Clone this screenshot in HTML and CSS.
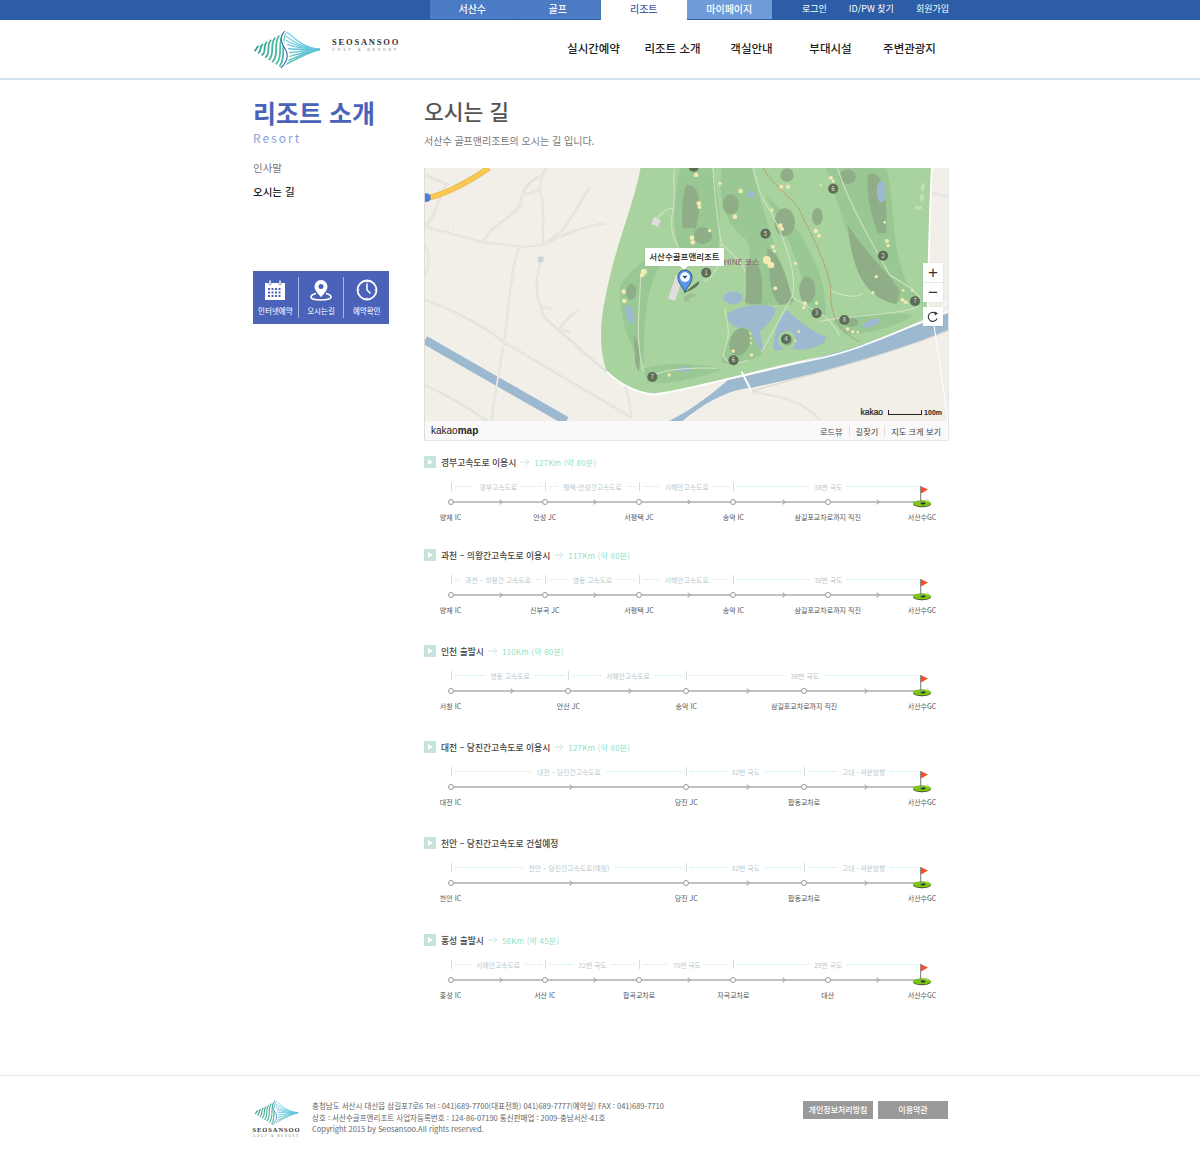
FILE: index.html
```html
<!DOCTYPE html>
<html lang="ko">
<head>
  <meta charset="UTF-8" />
  <meta name="viewport" content="width=device-width, initial-scale=1.0" />
  <title>오시는 길 - 서산수 골프앤리조트</title>
  <link rel="stylesheet" href="styles.css">
</head>
<body>
  <!-- shared symbols -->
  <svg class="defs" width="0" height="0">
    <defs>
      <linearGradient id="waveGrad" gradientUnits="userSpaceOnUse" x1="10" y1="0" x2="42" y2="0">
        <stop offset="0" stop-color="#2f9a8a" />
        <stop offset="1" stop-color="#4fc0a8" />
      </linearGradient>
      <linearGradient id="fanGrad" gradientUnits="userSpaceOnUse" x1="0" y1="6" x2="0" y2="40">
        <stop offset="0" stop-color="#7fd6ee" />
        <stop offset="0.55" stop-color="#62c4d8" />
        <stop offset="1" stop-color="#3fb59c" />
      </linearGradient>
      <symbol id="wave" viewBox="11 4 66 37">
        <g fill="none" stroke="url(#waveGrad)" stroke-width="1.700">
          <path d="M12.300 24.400C15 23 13.500 21 16.600 19.600" />
          <path d="M15.800 26.600C20 24 16.500 21 20.600 17.600" />
          <path d="M19.300 28.800C25 25 19.500 20 24.500 15.500" />
          <path d="M22.800 30.900C29 26 23 20 28.500 13.500" />
          <path d="M26.200 33.100C33 27 26.500 19 32.400 11.400" />
          <path d="M29.700 35.200C37 28 30 18 36.400 9.400" />
          <path d="M33.200 37.400C41 29 34 17 40.400 7.400" />
          <path d="M36.700 39.600C44 30 37 15 43 6" />
        </g>
        <g fill="none" stroke="url(#fanGrad)" stroke-width="1.300">
          <path d="M44 6C52 13 60 21 76 23" />
          <path d="M43 10C51 16 60 21.500 76 23" />
          <path d="M43 14C51 19 60 22 76 23" />
          <path d="M44 18C52 21 60 22.500 76 23" />
          <path d="M45 22C52 23 60 23 76 23" />
          <path d="M46 26C53 25.500 61 24 76 23" />
          <path d="M45.500 30C53 28 61 25 76 23" />
          <path d="M44 34C52 31 61 26 76 23" />
          <path d="M42 38C50 34 61 27 76 23" />
        </g>
        <path d="M43 5C36 12 41 19 44 24C47 30 44 36 39 41" fill="none" stroke="#fff" stroke-width="2.200" />
        <path d="M42 5C35 12 40 19 43 24C46 30 43 36 38 41" fill="none" stroke="#3d66c4" stroke-width="1.100" />
      </symbol>
      <symbol id="flag" viewBox="0 0 20 24">
        <ellipse cx="10" cy="19" rx="9" ry="3.300" fill="#4a4a35" />
        <ellipse cx="10" cy="18.300" rx="9" ry="3" fill="#7cc80e" />
        <ellipse cx="11" cy="18.500" rx="2.500" ry="1" fill="#26331a" />
        <circle cx="15.500" cy="15.500" r="1.300" fill="#d8d8d8" />
        <rect x="8" y="1" width="1.200" height="18" fill="#8d8d8d" />
        <path d="M9 1.200L16 4.500L10 8L9 8Z" fill="#f4502a" />
      </symbol>
      <symbol id="arrow" viewBox="0 0 10 8">
        <path d="M0 4H9M5.500 .8L9 4L5.500 7.200" fill="none" stroke="#bfe6d8" stroke-width="0.900" />
      </symbol>
    </defs>
  </svg>

  <div class="topbar">
    <div class="wrap topbar-in">
      <nav class="tabs">
        <a class="tab">서산수</a>
        <a class="tab">골프</a>
        <a class="tab active">리조트</a>
        <a class="tab light">마이페이지</a>
      </nav>
      <div class="util">
        <a>로그인</a>
        <a>ID/PW 찾기</a>
        <a>회원가입</a>
      </div>
    </div>
  </div>

  <header class="header">
    <div class="wrap header-in">
      <a class="logo">
        <svg class="logo-mark" width="68" height="38"><use href="#wave" /></svg>
        <span class="logo-text">
          <b>SEOSANSOO</b>
          <small>GOLF &amp; RESORT</small>
        </span>
      </a>
      <nav class="gnb">
        <a>실시간예약</a>
        <a>리조트 소개</a>
        <a>객실안내</a>
        <a>부대시설</a>
        <a>주변관광지</a>
      </nav>
    </div>
  </header>

  <div class="wrap content">
    <aside class="side">
      <h2>리조트 소개</h2>
      <p class="side-en">Resort</p>
      <ul class="side-menu">
        <li>인사말</li>
        <li class="on">오시는 길</li>
      </ul>
      <div class="quick">
        <a>
          <svg width="22" height="22" viewBox="0 0 22 22">
            <path d="M1 4h20v17H1z" fill="#fff" />
            <rect x="5" y="1" width="2" height="5" rx="1" fill="#fff" stroke="#4a62b8" stroke-width="0.6" />
            <rect x="15" y="1" width="2" height="5" rx="1" fill="#fff" stroke="#4a62b8" stroke-width="0.6" />
            <path d="M4 9h2v2H4zM7.500 9h2v2h-2zM11 9h2v2h-2zM14.500 9h2v2h-2zM4 12.500h2v2H4zM7.500 12.500h2v2h-2zM11 12.500h2v2h-2zM14.500 12.500h2v2h-2zM4 16h2v2H4zM7.500 16h2v2h-2zM11 16h2v2h-2zM14.500 16h2v2h-2z" fill="#4a62b8" />
          </svg>
          <span>인터넷예약</span>
        </a>
        <a>
          <svg width="22" height="22" viewBox="0 0 22 22">
            <path d="M11 1a6.500 6.500 0 0 0-6.500 6.500C4.500 12 11 18 11 18s6.500-6 6.500-10.500A6.500 6.500 0 0 0 11 1z" fill="#fff" />
            <circle cx="11" cy="7.500" r="2.500" fill="#4a62b8" />
            <path d="M6 14.500C3 15.300 1 16.500 1 18c0 2 4.500 3 10 3s10-1 10-3c0-1.500-2-2.700-5-3.500" fill="none" stroke="#fff" stroke-width="1.700" />
          </svg>
          <span>오시는길</span>
        </a>
        <a>
          <svg width="22" height="22" viewBox="0 0 22 22">
            <circle cx="11" cy="11" r="9.500" fill="none" stroke="#fff" stroke-width="1.800" />
            <path d="M11 4.500V11l3.500 3.500" fill="none" stroke="#fff" stroke-width="1.500" />
            <path d="M11 2v1.500M11 18.500V20M2 11h1.500M18.500 11H20" stroke="#fff" stroke-width="1" />
          </svg>
          <span>예약확인</span>
        </a>
      </div>
    </aside>

    <main class="main">
      <h1>오시는 길</h1>
      <p class="lead">서산수 골프앤리조트의 오시는 길 입니다.</p>

      <div class="map">
        <div class="map-view">
          <svg class="map-svg" viewBox="0 9 1553 759" preserveAspectRatio="none">
            <defs>
              <g id="roads">
                <path d="M0 185L170 232L280 245L350 240L410 195L490 65" />
                <path d="M0 405C100 440 200 500 235 532C350 600 500 690 610 755" />
                <path d="M0 660C60 690 130 730 185 768" />
                <path d="M280 245C250 330 250 440 235 532C220 620 205 700 197 768" />
                <path d="M170 232C190 190 240 170 280 125C290 100 280 60 350 30" />
                <path d="M350 240C350 180 355 130 345 90C335 60 350 30 358 9" />
                <path d="M285 90C310 85 335 80 345 72" />
                <path d="M0 185C25 160 40 110 60 60" />
                <path d="M0 30L70 60" />
                <path d="M350 240L390 220C420 210 440 190 535 175" />
                <path d="M345 285C325 350 330 390 345 430C350 470 400 490 480 570L540 620" />
                <path d="M400 490C420 460 435 450 458 435" />
                <path d="M345 425L378 432" />
                <path d="M400 490L430 503" />
                <path d="M0 240C20 280 5 320 0 330" />
                <path d="M590 650C605 690 610 730 612 758" />
                <path d="M940 620L970 680C1050 690 1130 710 1175 768" />
                <path d="M1505 85L1553 95" />
              </g>
            </defs>
            <rect x="0" y="9" width="1553" height="759" fill="#f2efe9" />
            <path d="M0 525L420 768" fill="none" stroke="#9cb9cf" stroke-width="26" />
            <path d="M725 768C800 730 860 680 900 645C1000 625 1300 550 1553 444V495C1400 560 1200 620 970 668C900 672 820 720 765 768Z" fill="#9cb9cf" />

            <use href="#roads" class="road" />
            <use href="#roads" class="road-in" />

            <path d="M640 9C620 120 565 240 535 400C518 480 518 560 540 620C570 650 620 680 680 685C800 670 1000 610 1150 580C1300 550 1420 490 1490 460C1495 300 1498 150 1503 9Z" fill="#a9d39e" />
            <!-- rough and fairways -->
            <g fill="#9ac894">
              <path d="M580 360C620 300 680 260 720 270C660 340 650 440 650 600C610 560 570 440 580 360Z" />
              <path d="M650 610C720 590 840 595 880 615C780 650 700 660 660 650Z" />
              <path d="M760 9C730 100 735 240 770 280H860C890 210 870 60 850 9Z" />
              <path d="M880 9C870 100 890 180 950 220C980 260 960 400 950 420H1090C1060 300 1000 130 970 9Z" />
              <path d="M1010 90C1070 200 1120 300 1140 440L1190 460C1200 340 1120 180 1010 90Z" />
              <path d="M1190 9C1240 150 1260 260 1340 380C1400 420 1460 420 1470 400C1380 340 1400 120 1370 9Z" />
              <path d="M1210 470C1260 440 1400 440 1450 450C1400 490 1290 510 1250 510Z" />
              <path d="M880 590C890 520 930 480 980 490L1000 570C960 590 910 610 880 590Z" />
            </g>
            <g fill="#8fad86">
              <path d="M775 60C820 55 820 120 805 190H765C762 150 762 100 775 60Z" />
              <ellipse cx="825" cy="212" rx="28" ry="25" />
              <ellipse cx="908" cy="118" rx="24" ry="30" />
              <ellipse cx="1068" cy="172" rx="30" ry="42" />
              <ellipse cx="1165" cy="155" rx="16" ry="26" />
              <ellipse cx="1075" cy="30" rx="20" ry="20" />
              <ellipse cx="1255" cy="35" rx="24" ry="22" />
              <path d="M1315 30C1350 10 1375 60 1370 205H1345C1320 140 1310 80 1315 30Z" />
              <path d="M960 285C1000 285 1005 340 1000 415C975 420 950 415 950 410C960 370 945 320 960 285Z" />
              <path d="M1015 250C1065 270 1075 360 1095 408L1055 420C1020 390 1025 320 1015 250Z" />
              <ellipse cx="1135" cy="375" rx="24" ry="40" />
              <path d="M1255 180C1320 280 1385 330 1410 380L1400 418C1320 400 1270 340 1255 180Z" />
              <ellipse cx="935" cy="530" rx="30" ry="42" transform="rotate(18 935 530)" />
              <ellipse cx="612" cy="380" rx="15" ry="24" />
              <ellipse cx="1265" cy="472" rx="22" ry="13" />
              <path d="M620 510C640 540 640 590 635 620L625 600Z" />
            </g>
            <!-- lakes -->
            <g fill="#9eb9cf">
              <ellipse cx="915" cy="398" rx="29" ry="19" />
              <path d="M895 450C930 420 1010 410 1040 430C1045 460 1000 490 995 500C1000 530 1005 550 1005 558C980 550 975 500 960 490C920 490 900 480 895 450Z" />
              <path d="M1075 435C1110 470 1150 500 1190 515C1195 540 1150 550 1110 555C1080 545 1050 560 1035 555C1035 510 1045 470 1075 435Z" />
              <ellipse cx="608" cy="448" rx="10" ry="30" transform="rotate(-12 608 448)" />
              <ellipse cx="770" cy="613" rx="25" ry="7" />
              <ellipse cx="1325" cy="475" rx="28" ry="10" transform="rotate(-20 1325 475)" />
              <ellipse cx="968" cy="88" rx="12" ry="10" />
              <ellipse cx="1355" cy="80" rx="14" ry="32" />
            </g>
            <ellipse cx="1075" cy="525" rx="26" ry="28" fill="#a9d39e" />
            <ellipse cx="1075" cy="525" rx="17" ry="17" fill="#8fad86" />
            <!-- cart paths -->
            <g fill="none" stroke="#d3e2c9" stroke-width="3">
              <path d="M740 9C735 60 745 90 738 130C720 200 745 240 770 270" />
              <path d="M855 9C860 100 870 170 880 240C880 290 870 320 830 350" />
              <path d="M880 235C930 280 950 310 950 320" />
              <path d="M975 9C985 60 1000 100 1020 130C1060 200 1110 330 1090 395L1000 560" />
              <path d="M1090 395C1130 430 1200 440 1230 510" />
              <path d="M1225 9C1260 120 1310 200 1380 330C1430 360 1460 380 1470 400" />
              <path d="M1205 375C1240 395 1290 400 1300 385" />
              <path d="M640 330C640 420 620 520 650 620" />
              <path d="M660 640C720 600 850 610 870 610" />
              <path d="M890 430C900 490 910 500 885 570C900 600 920 600 960 585" />
              <path d="M1170 470C1240 450 1420 450 1465 425" />
              <path d="M738 130C710 130 700 150 680 170" />
            </g>
            <!-- bank road -->
            <g fill="none">
              <path d="M540 620C570 650 610 680 680 690C800 670 1000 615 1150 585C1300 555 1420 490 1553 440" stroke="#fff" stroke-width="5" />
              <path d="M1492 465C1495 300 1498 150 1505 9" stroke="#fff" stroke-width="5" />
              <path d="M940 620L970 680" stroke="#fff" stroke-width="5" />
              <path d="M970 678C1180 620 1400 560 1553 497" stroke="#d9d6cf" stroke-width="3" />
              <path d="M1530 430L1553 410M1510 470L1553 768" stroke="#fff" stroke-width="3" />
            </g>
            <path d="M1005 9C1030 60 1090 100 1110 130C1140 200 1190 280 1205 370C1200 450 1230 500 1290 530" fill="none" stroke="#c0623a" stroke-width="2.500" stroke-dasharray="4 4" />
            <!-- sand -->
            <g fill="#f2eab0">
              <circle cx="650" cy="320" r="9" /><circle cx="645" cy="330" r="7" /><circle cx="590" cy="380" r="7" /><circle cx="592" cy="408" r="7" />
              <circle cx="813" cy="115" r="7" /><circle cx="815" cy="126" r="6" /><circle cx="793" cy="218" r="7" /><circle cx="795" cy="232" r="7" />
              <circle cx="845" cy="197" r="5" /><circle cx="805" cy="30" r="7" /><circle cx="876" cy="55" r="5" /><circle cx="937" cy="78" r="7" />
              <circle cx="920" cy="155" r="7" /><circle cx="1030" cy="135" r="5" /><circle cx="1055" cy="182" r="7" /><circle cx="1060" cy="192" r="6" />
              <circle cx="1015" cy="285" r="12" /><circle cx="1027" cy="300" r="10" /><circle cx="1033" cy="245" r="6" /><circle cx="1038" cy="258" r="5" />
              <circle cx="1100" cy="295" r="5" /><circle cx="1040" cy="370" r="6" /><circle cx="1160" cy="198" r="7" /><circle cx="1170" cy="212" r="6" />
              <circle cx="1058" cy="65" r="6" /><circle cx="1078" cy="65" r="6" /><circle cx="1205" cy="38" r="6" /><circle cx="1212" cy="48" r="5" />
              <circle cx="1175" cy="60" r="3" /><circle cx="1365" cy="172" r="4" /><circle cx="1372" cy="228" r="6" /><circle cx="1375" cy="242" r="5" />
              <circle cx="1340" cy="335" r="5" /><circle cx="1330" cy="383" r="5" /><circle cx="1418" cy="405" r="6" /><circle cx="1428" cy="412" r="6" />
              <circle cx="1420" cy="376" r="4" /><circle cx="1447" cy="376" r="4" /><circle cx="1128" cy="415" r="6" /><circle cx="1125" cy="428" r="5" />
              <circle cx="1163" cy="414" r="5" /><circle cx="1255" cy="492" r="5" /><circle cx="1270" cy="500" r="5" /><circle cx="1285" cy="501" r="4" />
              <circle cx="966" cy="505" r="3" /><circle cx="967" cy="520" r="3" /><circle cx="968" cy="535" r="3" /><circle cx="915" cy="558" r="5" />
              <circle cx="970" cy="570" r="5" /><circle cx="725" cy="630" r="5" /><circle cx="1110" cy="500" r="4" /><circle cx="1100" cy="528" r="3" />
            </g>
            <rect x="745" y="330" width="22" height="75" fill="#dedede" transform="rotate(18 745 330)" />
            <path d="M680 155L700 165L692 185L672 178Z" fill="#dedede" />
            <path d="M770 395L790 385L810 390L785 400L785 410L768 410Z" fill="#9fbf93" />
            <path d="M335 275H352V292H335Z" fill="#c8d3dc" />
            <path d="M70 140H80V148H70ZM72 178H80V192H72ZM215 155L224 160L222 168L214 164Z" fill="#fbfaf7" stroke="#dedbd4" />
            <path d="M1475 55H1485L1480 78H1472ZM1470 88H1482L1480 108H1470ZM1455 123H1475V133H1455Z" fill="#c5dcc0" />

            <!-- yellow road -->
            <path d="M0 100C60 90 130 50 190 9" fill="none" stroke="#dcb24a" stroke-width="17" />
            <path d="M0 100C60 90 130 50 190 9" fill="none" stroke="#fbc851" stroke-width="13" />
            <circle cx="4" cy="98" r="13" fill="#4b7fe0" />

            <text class="map-course" x="872" y="300">SHINE 코스</text>

            <g class="hole-marks">
              <circle cx="835" cy="323" r="15" /><text x="835" y="329">1</text>
              <circle cx="1360" cy="272" r="15" /><text x="1360" y="278">2</text>
              <circle cx="1163" cy="445" r="15" /><text x="1163" y="451">3</text>
              <circle cx="1072" cy="522" r="15" /><text x="1072" y="528">4</text>
              <circle cx="1011" cy="206" r="15" /><text x="1011" y="212">5</text>
              <circle cx="916" cy="586" r="15" /><text x="916" y="592">6</text>
              <circle cx="1212" cy="71" r="15" /><text x="1212" y="77">6</text>
              <circle cx="675" cy="636" r="15" /><text x="675" y="642">7</text>
              <circle cx="1455" cy="409" r="15" /><text x="1455" y="415">7</text>
              <circle cx="1245" cy="465" r="15" /><text x="1245" y="471">8</text>
              <circle cx="798" cy="5" r="15" />
            </g>
          </svg>

          <div class="info-win">서산수골프앤리조트</div>
          <svg class="pin" width="30" height="25" viewBox="0 0 34 28">
            <path d="M9 26L24 14C28 15 22 22 10 26Z" fill="#3b4d38" opacity="0.7" />
            <path d="M9 27C8 21 1 17 1 9a8 8 0 0 1 16 0c0 8-7 12-8 18z" fill="#5b97ee" stroke="#15305c" stroke-width="0.8" />
            <circle cx="9" cy="9" r="5.500" fill="#fff" />
            <path d="M6 7.500h6L9 11z" fill="#1d4a8c" />
          </svg>

          <div class="map-ctrl">
            <button class="ctrl-btn">+</button>
            <button class="ctrl-btn">−</button>
          </div>
          <div class="map-ctrl map-refresh">
            <button class="ctrl-btn">
              <svg width="12" height="12" viewBox="0 0 12 12">
                <path d="M10 7.500A4.500 4.500 0 1 1 8.500 2.300" fill="none" stroke="#333" stroke-width="1.100" />
                <path d="M7.500 .5L11 2.200L8 4.500Z" fill="#333" />
              </svg>
            </button>
          </div>
          <div class="map-scale">
            <b>kakao</b>
            <i class="scale-bar"></i>
            <span>100m</span>
          </div>
        </div>
        <div class="map-foot">
          <span class="kakaomap">kakao<b>map</b></span>
          <ul class="map-links">
            <li>로드뷰</li>
            <li>길찾기</li>
            <li>지도 크게 보기</li>
          </ul>
        </div>
      </div>

      <section class="route r-first">
        <h3 class="route-title"><i class="play"></i>경부고속도로 이용시<svg class="arrow"><use href="#arrow" /></svg><span class="dist">127Km (약 80분)</span></h3>
        <ul class="legs">
          <li><span>경부고속도로</span></li>
          <li><span>평택-안성간고속도로</span></li>
          <li><span>서해안고속도로</span></li>
          <li class="wide"><span>38번 국도</span></li>
        </ul>
        <div class="track">
          <i class="leg"></i><i class="leg"></i><i class="leg"></i><i class="leg"></i><i class="leg"></i>
          <svg class="flag"><use href="#flag" /></svg>
        </div>
        <div class="stops"><span>양재 IC</span><span>안성 JC</span><span>서평택 JC</span><span>송악 IC</span><span>삼길포교차로까지 직진</span><span>서산수GC</span></div>
      </section>

      <section class="route r-second">
        <h3 class="route-title"><i class="play"></i>과천 – 의왕간고속도로 이용시<svg class="arrow"><use href="#arrow" /></svg><span class="dist">117Km (약 80분)</span></h3>
        <ul class="legs">
          <li><span>과천 – 의왕간 고속도로</span></li>
          <li><span>영동 고속도로</span></li>
          <li><span>서해안고속도로</span></li>
          <li class="wide"><span>38번 국도</span></li>
        </ul>
        <div class="track">
          <i class="leg"></i><i class="leg"></i><i class="leg"></i><i class="leg"></i><i class="leg"></i>
          <svg class="flag"><use href="#flag" /></svg>
        </div>
        <div class="stops"><span>양재 IC</span><span>신부곡 JC</span><span>서평택 JC</span><span>송악 IC</span><span>삼길포교차로까지 직진</span><span>서산수GC</span></div>
      </section>

      <section class="route">
        <h3 class="route-title"><i class="play"></i>인천 출발시<svg class="arrow"><use href="#arrow" /></svg><span class="dist">110Km (약 80분)</span></h3>
        <ul class="legs">
          <li><span>영동 고속도로</span></li>
          <li><span>서해안고속도로</span></li>
          <li class="wide"><span>38번 국도</span></li>
        </ul>
        <div class="track">
          <i class="leg"></i><i class="leg"></i><i class="leg"></i><i class="leg"></i>
          <svg class="flag"><use href="#flag" /></svg>
        </div>
        <div class="stops"><span>서창 IC</span><span>안산 JC</span><span>송악 IC</span><span>삼길포교차로까지 직진</span><span>서산수GC</span></div>
      </section>

      <section class="route">
        <h3 class="route-title"><i class="play"></i>대전 – 당진간고속도로 이용시<svg class="arrow"><use href="#arrow" /></svg><span class="dist">127Km (약 80분)</span></h3>
        <ul class="legs">
          <li class="wide"><span>대전 – 당진간고속도로</span></li>
          <li><span>32번 국도</span></li>
          <li><span>고대 · 석문방향</span></li>
        </ul>
        <div class="track">
          <i class="leg wide"></i><i class="leg"></i><i class="leg"></i>
          <svg class="flag"><use href="#flag" /></svg>
        </div>
        <div class="stops"><span>대전 IC</span><span></span><span>당진 JC</span><span>합동교차로</span><span>서산수GC</span></div>
      </section>

      <section class="route">
        <h3 class="route-title"><i class="play"></i>천안 – 당진간고속도로 건설예정</h3>
        <ul class="legs">
          <li class="wide"><span>천안 – 당진간고속도로(예정)</span></li>
          <li><span>32번 국도</span></li>
          <li><span>고대 · 석문방향</span></li>
        </ul>
        <div class="track">
          <i class="leg wide"></i><i class="leg"></i><i class="leg"></i>
          <svg class="flag"><use href="#flag" /></svg>
        </div>
        <div class="stops"><span>천안 IC</span><span></span><span>당진 JC</span><span>합동교차로</span><span>서산수GC</span></div>
      </section>

      <section class="route r-last">
        <h3 class="route-title"><i class="play"></i>홍성 출발시<svg class="arrow"><use href="#arrow" /></svg><span class="dist">58Km (약 45분)</span></h3>
        <ul class="legs">
          <li><span>서해안고속도로</span></li>
          <li><span>32번 국도</span></li>
          <li><span>70번 국도</span></li>
          <li class="wide"><span>29번 국도</span></li>
        </ul>
        <div class="track">
          <i class="leg"></i><i class="leg"></i><i class="leg"></i><i class="leg"></i><i class="leg"></i>
          <svg class="flag"><use href="#flag" /></svg>
        </div>
        <div class="stops"><span>홍성 IC</span><span>서산 IC</span><span>합곡교차로</span><span>자곡교차로</span><span>대산</span><span>서산수GC</span></div>
      </section>
    </main>
  </div>

  <footer class="footer">
    <div class="wrap footer-in">
      <div class="foot-logo">
        <svg width="47" height="25"><use href="#wave" /></svg>
        <b>SEOSANSOO</b>
        <small>GOLF &amp; RESORT</small>
      </div>
      <div class="foot-text">
        <p>충청남도 서산시 대산읍 삼길포7로6 Tel : 041)689-7700(대표전화) 041)689-7777(예약실) FAX : 041)689-7710</p>
        <p>상호 : 서산수골프앤리조트 사업자등록번호 : 124-86-07190 통신판매업 : 2009-충남서산-41호</p>
        <p>Copyright 2015 by Seosansoo.All rights reserved.</p>
      </div>
      <div class="foot-btns">
        <a>개인정보처리방침</a>
        <a>이용약관</a>
      </div>
    </div>
  </footer>
</body>
</html>
```

FILE: styles.css
```css
body {
  margin: 0;
  background: #fff;
  color: #444;
  font-family: "Noto Sans CJK KR", "Noto Sans", sans-serif;
  font-size: 10px;
}
h1, h2, h3, p, ul {
  margin: 0;
  padding: 0;
  font-weight: normal;
}
ul {
  list-style: none;
}
.defs {
  position: absolute;
}
.wrap {
  width: 696px;
  margin-left: 253px;
}

/* top bar */
.topbar {
  height: 20px;
  background: #2c5da6;
}
.topbar-in {
  display: flex;
  height: 20px;
}
.tabs {
  display: flex;
  margin-left: 177px;
}
.tab {
  width: 85.5px;
  height: 19px;
  box-sizing: border-box;
  background: #4a7bc4;
  border-right: 1px solid #457abf;
  color: #fff;
  font-size: 10px;
  font-weight: 500;
  line-height: 17px;
  text-align: center;
}
.tab.active {
  height: 20px;
  background: #fff;
  border-right: 0;
  color: #4a5f9f;
}
.tab.light {
  background: #6f9bd9;
  border: 0;
}
.util {
  display: flex;
  gap: 22px;
  margin-left: auto;
  color: #fff;
  font-size: 9px;
  line-height: 17px;
}

/* header */
.header {
  height: 58px;
  border-bottom: 2px solid #d5e2f3;
}
.header-in {
  display: flex;
  align-items: center;
  height: 58px;
}
.logo {
  display: flex;
  align-items: center;
  gap: 11px;
}
.logo-text {
  display: flex;
  flex-direction: column;
  margin-top: -8px;
  font-family: "Liberation Serif", serif;
  color: #333;
  line-height: 1;
}
.logo-text b {
  font-size: 8.5px;
  letter-spacing: 1.8px;
}
.logo-text small {
  margin-top: 1px;
  font-size: 4px;
  letter-spacing: 2.8px;
  color: #777;
}
.gnb {
  display: flex;
  margin-top: -2px;
  margin-left: auto;
  color: #222;
  font-size: 11.5px;
  font-weight: 500;
}
.gnb a {
  width: 79px;
  text-align: center;
}

/* content */
.content {
  display: flex;
  margin-top: 18px;
}
.side {
  width: 171px;
  flex: none;
}
.side h2 {
  color: #4a62b8;
  font-size: 25px;
  font-weight: 700;
  line-height: 28px;
}
.side-en {
  margin-top: 3px;
  color: #8ca3dc;
  font-size: 12px;
  letter-spacing: 2px;
  line-height: 18px;
}
.side-menu {
  margin-top: 13px;
  color: #777;
  font-size: 10.5px;
}
.side-menu li {
  height: 24px;
  line-height: 16px;
}
.side-menu .on {
  color: #222;
  font-weight: 500;
}
.quick {
  display: flex;
  width: 136px;
  height: 53px;
  margin-top: 63px;
  padding: 6px 0;
  box-sizing: border-box;
  background: #4a62b8;
}
.quick a {
  flex: 1;
  display: flex;
  flex-direction: column;
  align-items: center;
  gap: 4px;
  padding-top: 2px;
  color: #e4e9f8;
  font-size: 7.5px;
  font-weight: 500;
  line-height: 12px;
  border-left: 1px solid #aab7e4;
}
.quick a:first-child {
  border-left: 0;
}

.main {
  width: 525px;
}
.main h1 {
  color: #555;
  font-size: 21.5px;
  font-weight: 500;
  line-height: 26px;
}
.lead {
  margin-top: 9px;
  color: #777;
  font-size: 10px;
  line-height: 16px;
}

/* map */
.map {
  margin-top: 19px;
  height: 273px;
  box-sizing: border-box;
  border: 1px solid #e8e8e8;
  border-top: 0;
  border-left-color: #dfdcd6;
}
.map-view {
  position: relative;
  height: 253px;
  overflow: hidden;
}
.map-svg {
  display: block;
  width: 100%;
  height: 253px;
}
.road {
  fill: none;
  stroke: #d7d5cf;
  stroke-width: 6;
}
.road-in {
  fill: none;
  stroke: #f8f7f4;
  stroke-width: 2.5;
}
.map-course {
  fill: #8c5f70;
  font-size: 24px;
}
.hole-marks circle {
  fill: #5c6c56;
}
.hole-marks text {
  fill: #e6e6e6;
  font-size: 17px;
  text-anchor: middle;
}
.info-win {
  position: absolute;
  left: 220px;
  top: 80px;
  width: 79px;
  height: 18px;
  background: #fff;
  color: #222;
  font-size: 8.5px;
  font-weight: 500;
  line-height: 17px;
  text-align: center;
  box-shadow: 0 0 1px rgba(0, 0, 0, 0.15);
}
.info-win::after {
  content: "";
  position: absolute;
  left: 35px;
  top: 18px;
  border: 4px solid transparent;
  border-top-color: #fff;
}
.pin {
  position: absolute;
  left: 252px;
  top: 101px;
}
.map-ctrl {
  position: absolute;
  left: 498px;
  top: 95px;
  display: flex;
  flex-direction: column;
  gap: 1px;
  background: #e6e6e6;
  box-shadow: 0 0 1px rgba(0, 0, 0, 0.2);
}
.map-refresh {
  top: 139px;
}
.ctrl-btn {
  display: flex;
  align-items: center;
  justify-content: center;
  width: 20px;
  height: 19px;
  padding: 0;
  border: 0;
  background: #fff;
  color: #333;
  font-family: "Liberation Sans", sans-serif;
  font-size: 17px;
  line-height: 1;
}
.map-scale {
  position: absolute;
  right: 6px;
  bottom: 4px;
  display: flex;
  align-items: flex-end;
  gap: 5px;
  color: #222;
  font-family: "Liberation Sans", sans-serif;
  font-size: 7px;
  font-weight: 700;
  line-height: 9px;
}
.map-scale b {
  font-size: 8.5px;
  font-weight: 400;
  -webkit-text-stroke: 0.2px #222;
}
.scale-bar {
  width: 32px;
  height: 4px;
  margin-bottom: 2px;
  margin-right: -3px;
  border: 1px solid #222;
  border-top: 0;
}
.map-foot {
  display: flex;
  align-items: center;
  justify-content: space-between;
  height: 19px;
  padding: 0 7px 0 6px;
  background: #f9f9f9;
}
.kakaomap {
  color: #222;
  font-family: "Liberation Sans", sans-serif;
  font-size: 10px;
}
.map-links {
  display: flex;
  align-items: center;
  color: #444;
  font-size: 8.2px;
  line-height: 10px;
}
.map-links li + li {
  margin-left: 6px;
  padding-left: 6px;
  border-left: 1px solid #ddd;
}

/* routes */
.route {
  height: 78px;
  margin-top: 18px;
}
.r-first,
.r-second {
  margin-top: 15px;
}
.r-last {
  margin-top: 19px;
}
.route-title {
  display: flex;
  align-items: center;
  height: 12px;
  color: #444;
  font-size: 8.8px;
  font-weight: 500;
  white-space: nowrap;
}
.play {
  flex: none;
  position: relative;
  width: 12px;
  height: 12px;
  margin-right: 5px;
  background: #c5e5dc;
}
.play::after {
  content: "";
  position: absolute;
  left: 4px;
  top: 3px;
  border: 3px solid transparent;
  border-left: 5px solid #fff;
  border-right: 0;
}
.arrow {
  flex: none;
  width: 10px;
  height: 8px;
  margin: 0 4px;
}
.dist {
  color: #93dfc6;
  font-size: 8px;
  font-weight: 400;
  letter-spacing: 0.2px;
}
.legs {
  display: flex;
  height: 10px;
  margin: 14px 27px 0 26.5px;
}
.legs li {
  flex: 1 1 0;
  min-width: 0;
  display: flex;
  align-items: center;
  gap: 5px;
  height: 9px;
  box-shadow: inset 1px 0 #d3e0e0;
  color: #b7c9ce;
  font-size: 6.8px;
  white-space: nowrap;
}
.legs li.wide {
  flex-grow: 2;
}
.legs li::before,
.legs li::after {
  content: "";
  flex: 1;
  border-top: 1px dotted #cfe5e3;
}
.legs li::before {
  margin-left: 4px;
}
.legs li::after {
  margin-right: 3px;
}
.track {
  position: relative;
  display: flex;
  height: 2px;
  margin: 9px 27px 0 26.5px;
  background: #c2c2c2;
}
.leg {
  flex: 1;
  position: relative;
}
.leg.wide {
  flex: 2;
}
.leg::before {
  content: "";
  position: absolute;
  left: -3px;
  top: -2px;
  width: 4px;
  height: 4px;
  border: 1px solid #999;
  border-radius: 50%;
  background: #fff;
}
.leg::after {
  content: "";
  position: absolute;
  left: 50%;
  top: -1px;
  width: 3px;
  height: 3px;
  border-top: 1px solid #aaa;
  border-right: 1px solid #aaa;
  transform: rotate(45deg);
}
.flag {
  position: absolute;
  right: -10px;
  bottom: -6px;
  width: 20px;
  height: 24px;
}
.stops {
  display: flex;
  justify-content: space-between;
  margin: 9px 27px 0 26.5px;
  color: #555;
  font-size: 7px;
  line-height: 11px;
}
.stops span {
  display: flex;
  justify-content: center;
  width: 0;
  white-space: nowrap;
}

/* footer */
.footer {
  height: 84px;
  margin-top: 63px;
  border-top: 1px solid #e8e8e8;
}
.footer-in {
  display: flex;
  align-items: flex-start;
  padding-top: 24px;
}
.foot-logo {
  display: flex;
  flex-direction: column;
  align-items: center;
  width: 47px;
  margin-right: 12px;
  font-family: "Liberation Serif", serif;
  color: #333;
  line-height: 1;
}
.foot-logo b {
  margin-top: 2px;
  font-size: 6.5px;
  letter-spacing: 0.9px;
  white-space: nowrap;
}
.foot-logo small {
  margin-top: 1px;
  font-size: 3px;
  letter-spacing: 1.8px;
  color: #777;
  white-space: nowrap;
}
.foot-text {
  color: #666;
  font-size: 7.5px;
  line-height: 11.5px;
  white-space: nowrap;
}
.foot-btns {
  display: flex;
  gap: 5px;
  margin-left: auto;
  margin-right: 1px;
  margin-top: 1px;
}
.foot-btns a {
  width: 70px;
  height: 18px;
  background: #999;
  color: #fff;
  font-size: 8px;
  font-weight: 500;
  line-height: 17px;
  text-align: center;
}
```
